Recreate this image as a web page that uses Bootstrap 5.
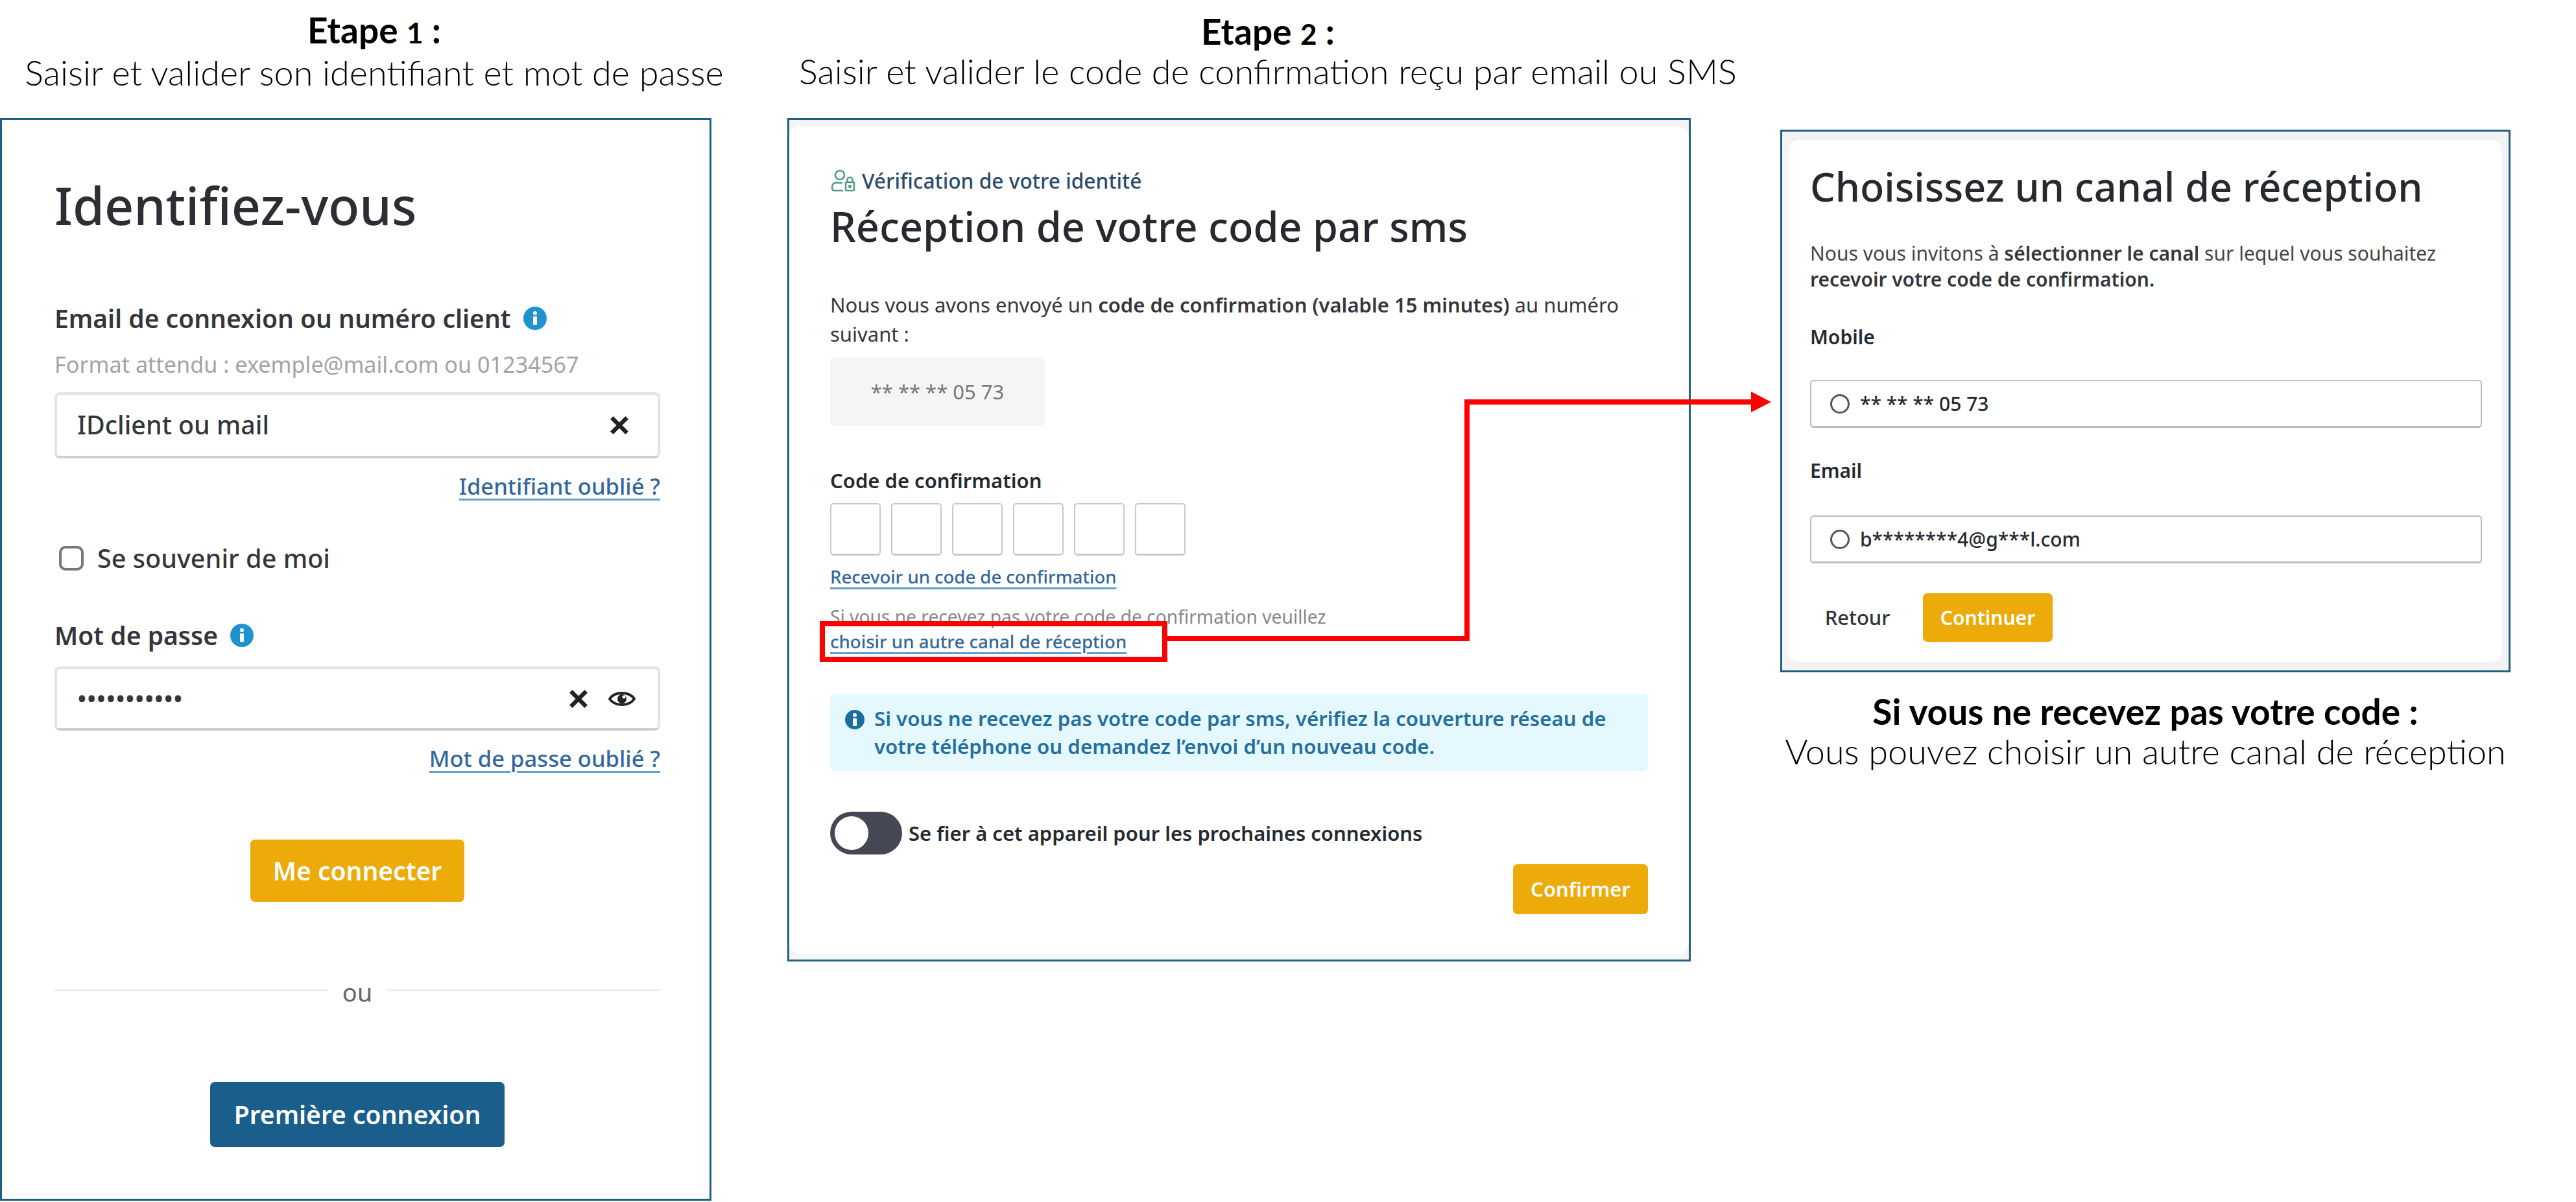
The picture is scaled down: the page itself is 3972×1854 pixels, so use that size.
<!DOCTYPE html>
<html lang="fr">
<head>
<meta charset="utf-8">
<title>Etapes de connexion</title>
<link href="https://cdn.jsdelivr.net/npm/bootstrap@5.3.0/dist/css/bootstrap.min.css" rel="stylesheet">
<style>
body{margin:0;background:#fff;font-family:"Noto Sans","Liberation Sans",sans-serif;color:#23262b}
.canvas{position:relative;width:3972px;height:1854px;overflow:hidden}
.overlay{position:absolute;left:0;top:0;pointer-events:none}
.cap{font-family:Lato,"Liberation Sans",sans-serif;color:#000;text-align:center;white-space:nowrap;font-size:54px;line-height:61px;font-weight:300}
.cap b{font-weight:700;font-size:55px}
.cap b i{font-style:normal;font-size:.8em}
.c1{width:1154px;flex:none}
.c2{width:1482px;margin-left:60px;flex:none}
.c3{width:1126px;margin-left:49px;flex:none}
.head1{height:182px;padding-top:16px}
.head2{height:182px;padding-top:19px;line-height:58px}
.frame{border:3px solid #1f5f82;background:#fff}
.p1{width:1097px;height:1670px;padding:82px 76px 0 81px}
.p2{width:1393px;height:1301px;background:#f3f5f5;padding:10px 0 0}
.p2in{height:1276px;background:#fff;border-radius:16px;padding:62px 59px 0 63px}
.p3{height:837px;margin-top:200px;background:#f3f3f3;padding:13px 10px}
.p3in{height:805px;background:#fff;border-radius:16px;padding:34px 31px 0 33px}
.capbot{margin-top:30px}
.title1{font-size:79px;line-height:100px;font-weight:500;margin:0;color:#2b2e33}
.lab{font-size:39px;line-height:40px;font-weight:600;color:#33363b;display:flex;align-items:center;gap:18px}
.m104{margin-top:104px}.m79{margin-top:79px}
.hint{font-size:34.200px;line-height:40px;margin-top:31px;color:#a3a3a3}
.field{height:102px;border:4px solid #e4e4e4;border-bottom-color:#cfcfcf;border-radius:8px;background:#fff;padding:0 43px 0 31px;font-size:39.400px;font-weight:500;color:#33363b;display:flex;align-items:center;justify-content:space-between}
.mt23{margin-top:23px}
.mt28{margin-top:28px;height:99px;padding-right:34px}
.icons{display:flex;align-items:center;gap:30px}
.forgot{font-size:34.600px;line-height:40px;margin-top:23px;text-align:right}
.forgot a,.lnk{color:#32679c;font-weight:500;text-decoration:underline;text-decoration-color:#5f9fd0;text-decoration-thickness:3px;text-underline-offset:6px}
.chk{display:flex;align-items:center;font-size:39.600px;line-height:40px;font-weight:500;margin-top:71px;color:#33363b;padding-left:7px;gap:21px}
.chk input{width:38px;height:38px;margin:0;border:4px solid #777;border-radius:7px;flex:none}
.act{display:flex;justify-content:center}
.gold{background:#ecab08;border:0;color:#fff;border-radius:7px;font-weight:600;padding:0}
.gold:hover{background:#ecab08;color:#fff}
.b1{width:330px;height:96px;font-size:39px;margin-top:105px}
.blue{background:#1a5f8b;border:0;color:#fff;border-radius:7px;font-weight:600;width:454px;height:100px;font-size:39px;margin-top:119px;padding:0}
.or{display:flex;align-items:center;margin-top:119px;font-size:38px;line-height:40px;color:#666;gap:22px}
.or i{flex:1;height:3px;background:#ececec;margin-top:-6px}
.kick{font-size:31.700px;line-height:44px;font-weight:500;color:#2d4a6e;display:flex;align-items:center;gap:10px;padding-left:1px}
.title2{font-size:63px;line-height:90px;font-weight:500;margin:3px 0 0;color:#26292e}
.txt{font-size:31px;line-height:45px;margin:54px 0 0;width:1240px;color:#33363b}
.txt b{font-weight:600}
.num{width:331px;height:106px;background:#f5f5f5;border-radius:8px;margin-top:13px;display:flex;align-items:center;justify-content:center;font-size:31px;color:#777}
.lab2{font-size:31px;line-height:40px;font-weight:600;margin-top:64px;color:#26292e}
.digits{display:flex;gap:16px;margin-top:15px}
.digits span{width:78px;height:81px;border:2px solid #c9c9c9;border-bottom-width:3px;border-radius:5px}
.lnk2{font-size:27.500px;line-height:40px;margin-top:13px}
.note{font-size:28.200px;line-height:40px;margin-top:21px;color:#888}
.lnk3{font-size:27.600px;line-height:40px;margin-top:-2px}
.info{margin:61px 0 0;padding:17px 0 0 22px;height:119px;border:0;border-radius:6px;background:#e5f8fd;color:#23709f;font-size:31.200px;line-height:43px;font-weight:600;display:flex;gap:14px;width:1261px}
.info svg{flex:none;margin-top:7px}
.tog{display:flex;align-items:center;gap:10px;margin-top:63px;font-size:31px;font-weight:600;color:#26292e;line-height:40px}
.track{width:111px;height:66px;border-radius:33px;background:#454854;position:relative;flex:none}
.knob{position:absolute;left:7px;top:7px;width:52px;height:52px;border-radius:50%;background:#fff;display:block}
.endrow{display:flex;justify-content:flex-end;width:1261px;margin-top:15px}
.b2{width:208px;height:77px;font-size:31px}
.title3{font-size:61px;line-height:76px;font-weight:500;margin:0;color:#26292e}
.txt3{font-size:30px;line-height:40px;margin:45px 0 0;color:#444;white-space:nowrap}
.txt3 b{font-weight:600;color:#33363b}
.lab3{font-size:30px;line-height:40px;font-weight:600;color:#26292e}
.opt{height:74px;border:2px solid #bdbdbd;border-bottom-width:3px;border-radius:5px;margin-top:49px;padding-left:29px;display:flex;align-items:center;gap:16px;font-size:30px;font-weight:500;color:#26292e;width:1036px}
.opt input{width:30px;height:30px;margin:0;border:3px solid #555;flex:none}
.opt1{margin-top:46px}
.mt49{margin-top:49px}
.mt46{margin-top:46px}
.foot{display:flex;align-items:center;margin-top:46px}
.ret{width:174px;padding:0 28px 0 0;text-align:center;font-size:31px;font-weight:500;color:#333}
.b3{width:200px;height:75px;font-size:30px}
</style>
</head>
<body>
<div class="canvas">
<div class="d-flex align-items-start">

  <div class="c1">
    <div class="cap head1"><b>Etape <i>1</i> :</b><br>Saisir et valider son identifiant et mot de passe</div>
    <div class="frame p1">
      <h1 class="title1">Identifiez-vous</h1>
      <div class="lab m104">Email de connexion ou numéro client
        <svg width="38" height="38" viewBox="0 0 38 38"><circle cx="19" cy="19" r="18" fill="#1f93d0"/><circle cx="19" cy="11" r="3" fill="#fff"/><rect x="16" y="16" width="6" height="13" rx="1" fill="#fff"/></svg>
      </div>
      <div class="hint">Format attendu : exemple@mail.com ou 01234567</div>
      <div class="field mt23">IDclient ou mail
        <svg width="32" height="32" viewBox="0 0 30 30"><path d="M4 4L26 26M26 4L4 26" stroke="#222" stroke-width="6"/></svg>
      </div>
      <div class="forgot"><a href="#">Identifiant oublié ?</a></div>
      <div class="chk"><input class="form-check-input" type="checkbox"><span>Se souvenir de moi</span></div>
      <div class="lab m79">Mot de passe
        <svg width="38" height="38" viewBox="0 0 38 38"><circle cx="19" cy="19" r="18" fill="#1f93d0"/><circle cx="19" cy="11" r="3" fill="#fff"/><rect x="16" y="16" width="6" height="13" rx="1" fill="#fff"/></svg>
      </div>
      <div class="field mt28"><span>•••••••••••</span>
        <span class="icons">
          <svg width="32" height="32" viewBox="0 0 30 30"><path d="M4 4L26 26M26 4L4 26" stroke="#222" stroke-width="6"/></svg>
          <svg width="42" height="30" viewBox="0 0 42 30"><path d="M2 15C10 3 32 3 40 15C32 27 10 27 2 15Z" fill="none" stroke="#222" stroke-width="4"/><circle cx="21" cy="15" r="7" fill="#222"/><circle cx="24" cy="12" r="2.5" fill="#fff"/></svg>
        </span>
      </div>
      <div class="forgot"><a href="#">Mot de passe oublié ?</a></div>
      <div class="act"><button class="btn gold b1" type="button">Me connecter</button></div>
      <div class="or"><i></i><span>ou</span><i></i></div>
      <div class="act"><button class="btn blue" type="button">Première connexion</button></div>
    </div>
  </div>

  <div class="c2">
    <div class="cap head2"><b>Etape <i>2</i> :</b><br>Saisir et valider le code de confirmation reçu par email ou SMS</div>
    <div class="frame p2"><div class="p2in">
      <div class="kick">
        <svg width="38" height="36" viewBox="0 0 38 36" fill="none" stroke="#4f9c86" stroke-width="2.6"><circle cx="14" cy="9" r="7"/><path d="M18 21H8C4 21 2 24 2 28C2 31 3 33 6 33H19"/><rect x="23" y="20" width="13" height="13" rx="2"/><path d="M25.5 20V16.5a4 4 0 0 1 8 0V20"/><circle cx="29.500" cy="26.500" r="1.300" fill="#4f9c86"/></svg>
        <span>Vérification de votre identité</span>
      </div>
      <h2 class="title2">Réception de votre code par sms</h2>
      <p class="txt">Nous vous avons envoyé un <b>code de confirmation (valable 15 minutes)</b> au numéro suivant :</p>
      <div class="num">** ** ** 05 73</div>
      <div class="lab2">Code de confirmation</div>
      <div class="digits"><span></span><span></span><span></span><span></span><span></span><span></span></div>
      <div class="lnk2"><a class="lnk" href="#">Recevoir un code de confirmation</a></div>
      <div class="note">Si vous ne recevez pas votre code de confirmation veuillez</div>
      <div class="lnk3"><a class="lnk" href="#">choisir un autre canal de réception</a></div>
      <div class="alert info" role="alert">
        <svg width="32" height="32" viewBox="0 0 32 32"><circle cx="16" cy="16" r="15" fill="#1a6f9f"/><circle cx="16" cy="9" r="3" fill="#fff"/><rect x="13" y="14" width="6" height="12" rx="1" fill="#fff"/></svg>
        <span>Si vous ne recevez pas votre code par sms, vérifiez la couverture réseau de votre téléphone ou demandez l’envoi d’un nouveau code.</span>
      </div>
      <div class="tog"><span class="track"><span class="knob"></span></span><span>Se fier à cet appareil pour les prochaines connexions</span></div>
      <div class="endrow"><button class="btn gold b2" type="button">Confirmer</button></div>
    </div></div>
  </div>

  <div class="c3">
    <div class="frame p3"><div class="p3in">
      <h2 class="title3">Choisissez un canal de réception</h2>
      <p class="txt3">Nous vous invitons à <b>sélectionner le canal</b> sur lequel vous souhaitez<br><b>recevoir votre code de confirmation.</b></p>
      <div class="lab3 mt49">Mobile</div>
      <label class="opt opt1"><input class="form-check-input" type="radio" name="canal"><span>** ** ** 05 73</span></label>
      <div class="lab3 mt46">Email</div>
      <label class="opt"><input class="form-check-input" type="radio" name="canal"><span>b********4@g***l.com</span></label>
      <div class="foot"><span class="ret">Retour</span><button class="btn gold b3" type="button">Continuer</button></div>
    </div></div>
    <div class="cap capbot"><b>Si vous ne recevez pas votre code :</b><br>Vous pouvez choisir un autre canal de réception</div>
  </div>

</div>
<svg class="overlay" width="3972" height="1854" viewBox="0 0 3972 1854">
  <rect x="1268" y="962" width="528" height="55" fill="none" stroke="#f00" stroke-width="8"/>
  <path d="M1796 985H2262V620H2706" fill="none" stroke="#f00" stroke-width="8"/>
  <polygon points="2700,604 2731,620 2700,636" fill="#f00"/>
</svg>
</div>
<script src="https://cdn.jsdelivr.net/npm/bootstrap@5.3.0/dist/js/bootstrap.bundle.min.js"></script>
</body>
</html>
